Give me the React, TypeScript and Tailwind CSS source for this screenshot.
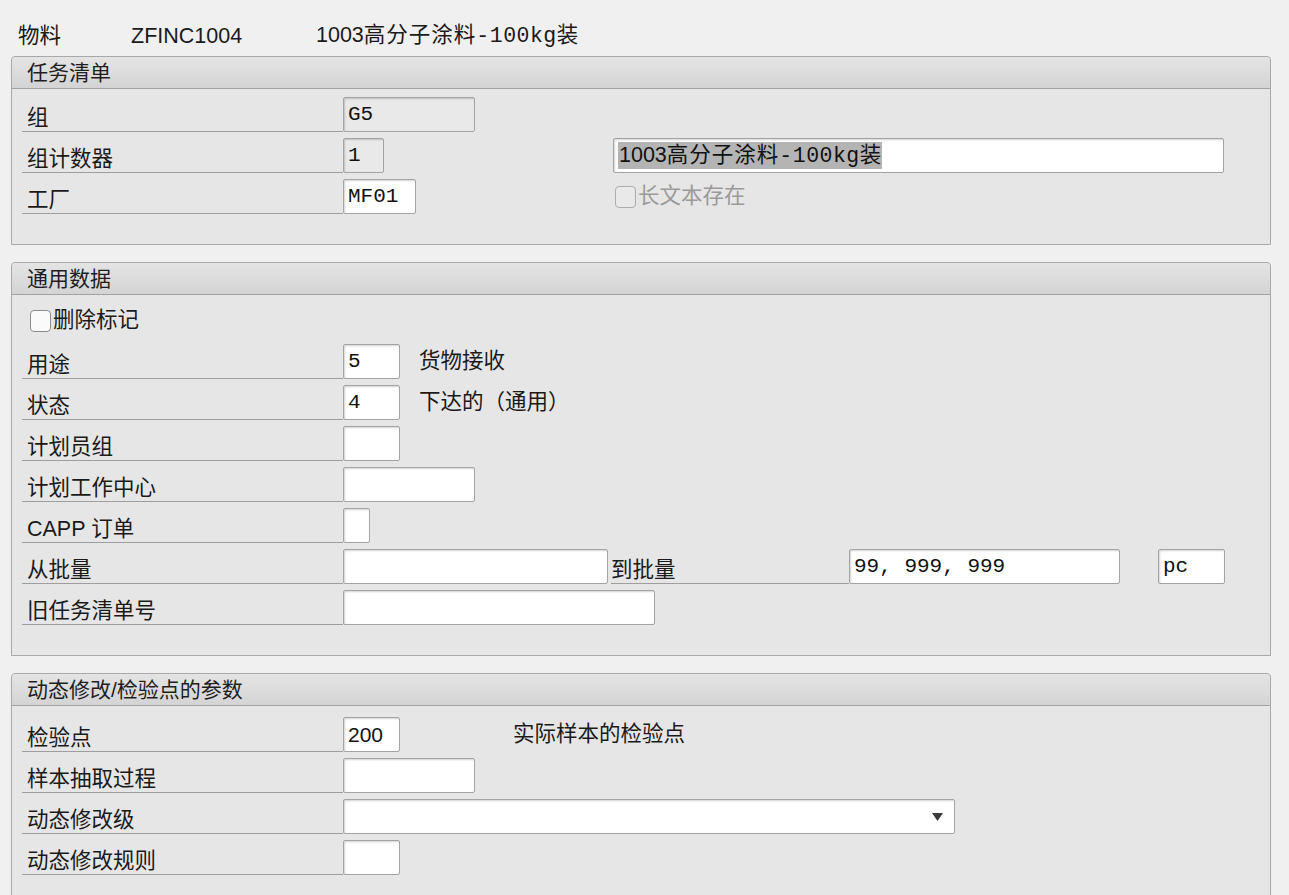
import type { ReactNode } from 'react'

const SANS = "font-['Liberation_Sans','Noto_Sans_CJK_SC',sans-serif]"
const MONO = "font-['Liberation_Mono','Noto_Sans_CJK_SC',monospace]"

function Panel({ title, children, last }: { title: string; children: ReactNode; last?: boolean }) {
  return (
    <section className="ml-[11px] w-[1260px] border border-[#a9a9a9] rounded-t-[4px] bg-[#e6e6e6]">
      <div className="h-[32px] rounded-t-[4px] bg-linear-to-b from-[#e4e4e4] to-[#d4d4d4] border-b border-[#a2a2a2] pl-[15px] flex items-center text-[21px] text-[#1e1e1e] leading-none">
        {title}
      </div>
      <div className={`px-[10px] flex flex-col gap-[6px] ${last ? 'pt-[11px] pb-[40px]' : 'pt-[8px] pb-[30px]'}`}>
        {children}
      </div>
    </section>
  )
}

function Row({ label, children }: { label?: string; children?: ReactNode }) {
  return (
    <div className="flex h-[35px] items-stretch">
      {label !== undefined && <FieldLabel text={label} width="w-[321px]" />}
      {children}
    </div>
  )
}

function FieldLabel({ text, width }: { text: string; width: string }) {
  return (
    <div className={`${width} shrink-0 border-b border-[#9e9e9e] pl-[5px] pb-[1px] flex items-end text-[21.5px] leading-[24px] text-[#1a1a1a]`}>
      {text}
    </div>
  )
}

function Field({
  width,
  value,
  readOnly,
  mono = true,
  children,
}: {
  width: string
  value?: string
  readOnly?: boolean
  mono?: boolean
  children?: ReactNode
}) {
  return (
    <div
      className={`${width} shrink-0 h-[35px] border border-[#a4a4a4] rounded-[2px] shadow-[inset_1px_1px_2px_rgba(0,0,0,0.18)] px-[4px] flex items-center text-[21px] text-[#111] ${
        readOnly ? 'bg-[#e9e9e9]' : 'bg-white'
      } ${mono ? MONO : SANS}`}
    >
      {value}
      {children}
    </div>
  )
}

function CheckBox({ label, disabled }: { label: string; disabled?: boolean }) {
  return (
    <div className={`flex items-center gap-[2px] text-[21.5px] ${disabled ? 'text-[#9a9a9a]' : 'text-[#1a1a1a]'}`}>
      <span
        className={`block shrink-0 w-[21px] h-[22px] rounded-[4px] border-[1.5px] ${
          disabled ? 'border-[#adadad] bg-[#e9e9e9]' : 'border-[#8c8c8c] bg-[#fafafa]'
        }`}
      />
      <span>{label}</span>
    </div>
  )
}

function Desc({ text, offset }: { text: string; offset: string }) {
  return <div className={`${offset} self-center text-[21.5px] text-[#1a1a1a]`}>{text}</div>
}

function MaterialText() {
  return (
    <>
      1003<span className="tracking-[1px]">高分子涂料</span>
      <span className={`${MONO} tracking-[0.5px]`}>-100kg</span>装
    </>
  )
}

export default function App() {
  return (
    <div className={`min-h-[895px] w-[1289px] bg-[#f0f0f0] ${SANS} overflow-hidden`}>
      <div className="h-[56px] flex items-end pb-[8px] pl-[18px] text-[21.5px] leading-[24px] text-[#1a1a1a]">
        <span className="w-[113px]">物料</span>
        <span className="w-[185px]">ZFINC1004</span>
        <span>
          <MaterialText />
        </span>
      </div>

      <div className="flex flex-col gap-[17px]">
        <Panel title="任务清单">
          <Row label="组">
            <Field width="w-[132px]" value="G5" readOnly />
          </Row>
          <Row label="组计数器">
            <Field width="w-[41px]" value="1" readOnly />
            <div className="ml-[229px]">
              <Field width="w-[611px]" mono={false}>
                <span className="bg-[#b4b4b4] leading-[26px] text-[21.5px] px-[1px]">
                  <MaterialText />
                </span>
              </Field>
            </div>
          </Row>
          <Row label="工厂">
            <Field width="w-[73px]" value="MF01" />
            <div className="ml-[199px] self-center">
              <CheckBox label="长文本存在" disabled />
            </div>
          </Row>
        </Panel>

        <Panel title="通用数据">
          <Row>
            <div className="pl-[8px] self-center">
              <CheckBox label="删除标记" />
            </div>
          </Row>
          <Row label="用途">
            <Field width="w-[57px]" value="5" />
            <Desc text="货物接收" offset="ml-[19px]" />
          </Row>
          <Row label="状态">
            <Field width="w-[57px]" value="4" />
            <Desc text="下达的（通用）" offset="ml-[19px]" />
          </Row>
          <Row label="计划员组">
            <Field width="w-[57px]" />
          </Row>
          <Row label="计划工作中心">
            <Field width="w-[132px]" />
          </Row>
          <Row label="CAPP 订单">
            <Field width="w-[27px]" />
          </Row>
          <Row label="从批量">
            <Field width="w-[265px]" />
            <div className="ml-[3px] flex">
              <FieldLabel text="到批量" width="w-[238px] !pl-0" />
            </div>
            <Field width="w-[271px]" value="99, 999, 999" />
            <div className="ml-[38px]">
              <Field width="w-[67px]" value="pc" />
            </div>
          </Row>
          <Row label="旧任务清单号">
            <Field width="w-[312px]" />
          </Row>
        </Panel>

        <Panel title="动态修改/检验点的参数" last>
          <Row label="检验点">
            <Field width="w-[57px]" value="200" mono={false} />
            <Desc text="实际样本的检验点" offset="ml-[113px]" />
          </Row>
          <Row label="样本抽取过程">
            <Field width="w-[132px]" />
          </Row>
          <Row label="动态修改级">
            <Field width="w-[612px]">
              <svg className="ml-auto mr-[7px]" width="11" height="8" viewBox="0 0 11 8">
                <path d="M0 0 L11 0 L5.5 8 Z" fill="#3a3a3a" />
              </svg>
            </Field>
          </Row>
          <Row label="动态修改规则">
            <Field width="w-[57px]" />
          </Row>
        </Panel>
      </div>
    </div>
  )
}
